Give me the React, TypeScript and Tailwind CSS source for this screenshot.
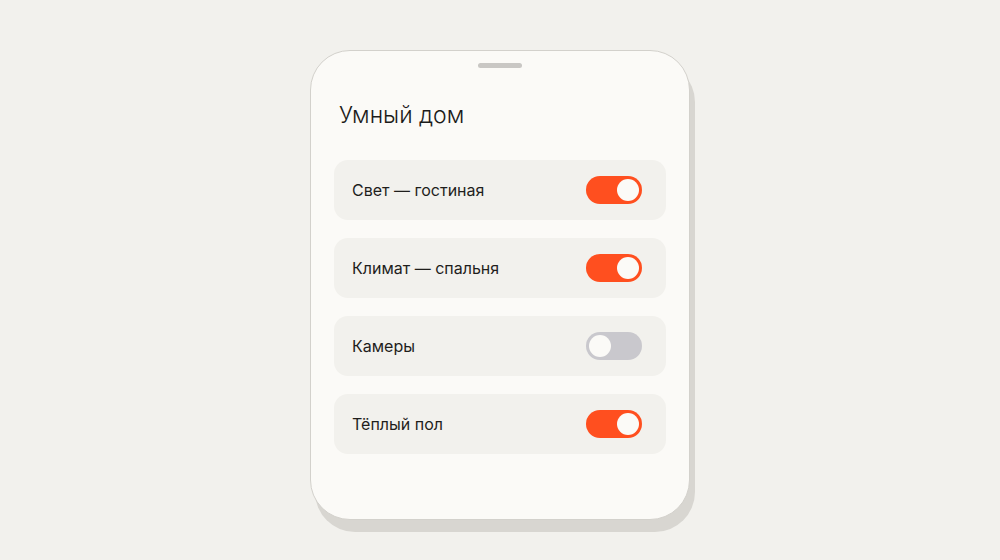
import React from "react";

interface Device {
  name: string;
  on: boolean;
}

const devices: Device[] = [
  { name: "Свет — гостиная", on: true },
  { name: "Климат — спальня", on: true },
  { name: "Камеры", on: false },
  { name: "Тёплый пол", on: true },
];

function Toggle({ on }: { on: boolean }) {
  return (
    <div
      className={`w-[56px] h-[28px] rounded-full flex items-center px-[3px] ${
        on ? "bg-[#ff4f1f] justify-end" : "bg-[#c9c8cd] justify-start"
      }`}
    >
      <div className="w-[22px] h-[22px] rounded-full bg-[#fbfaf7]" />
    </div>
  );
}

export default function App() {
  return (
    <div className="w-[1000px] h-[560px] bg-[#f2f1ed] flex justify-center pt-[50px] font-['Inter',sans-serif]">
      <div className="w-[380px] h-[470px] bg-[#fbfaf7] border border-[#d3d1cc] rounded-[40px] shadow-[5px_12px_0_#d8d6d1] px-[23px] pt-[12px]">
        {/* Handle */}
        <div className="flex justify-center">
          <div className="w-[44px] h-[5px] rounded-full bg-[#c9c7c4]" />
        </div>

        <h1 className="mt-[32px] ml-[5px] text-[23px] leading-[30px] text-[#1c1b1a] font-light">
          Умный дом
        </h1>

        <div className="mt-[30px] flex flex-col gap-[18px]">
          {devices.map((d) => (
            <div
              key={d.name}
              className="h-[60px] rounded-[14px] bg-[#f2f1ed] flex items-center justify-between pl-[18px] pr-[24px]"
            >
              <span className="text-[16px] text-[#1f1e1c]">{d.name}</span>
              <Toggle on={d.on} />
            </div>
          ))}
        </div>
      </div>
    </div>
  );
}
